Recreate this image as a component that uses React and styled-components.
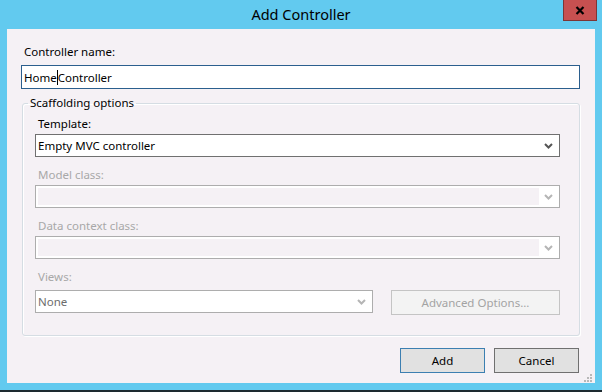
import React from 'react';
import styled, { createGlobalStyle } from 'styled-components';

const GlobalStyle = createGlobalStyle`
  html, body {
    margin: 0;
    padding: 0;
    background: #62caef;
  }
  body {
    font-family: 'Noto Sans', 'Liberation Sans', sans-serif;
    font-size: 11.5px;
  }
`;

const Window = styled.div`
  width: 602px;
  height: 392px;
  box-sizing: border-box;
  background: #62caef;
  border-bottom: 2px solid #1d2a30;
  display: flex;
  flex-direction: column;
`;

const TitleBar = styled.div`
  position: relative;
  height: 29px;
  display: flex;
  align-items: center;
  justify-content: center;

  h1 {
    margin: 0;
    font-family: 'Noto Sans', sans-serif;
    font-size: 14.5px;
    font-weight: 400;
    color: #000;
    line-height: 29px;
  }
`;

const CloseButton = styled.div`
  position: absolute;
  top: 0;
  right: 5px;
  width: 34px;
  height: 21px;
  box-sizing: border-box;
  background: #c75050;
  border: 1px solid #7d3535;
  border-top: none;
  display: flex;
  align-items: center;
  justify-content: center;
`;

const Client = styled.div`
  margin-left: 7px;
  width: 588px;
  height: 354px;
  background: #f5f1f5;
  display: flex;
  flex-direction: column;
  position: relative;
`;

const Label = styled.div`
  line-height: 16px;
  height: 16px;
  color: ${(p) => (p.disabled ? '#a8a8a8' : '#000')};
  white-space: nowrap;
`;

const NameLabel = styled(Label)`
  margin: 15px 0 5px 17px;
`;

const NameInput = styled.div`
  margin-left: 14px;
  width: 559px;
  height: 24px;
  box-sizing: border-box;
  border: 1px solid #2b5f8e;
  background: #fff;
  display: flex;
  align-items: center;
  padding-left: 2px;
  color: #000;
`;

const Caret = styled.span`
  display: inline-block;
  width: 1px;
  height: 15px;
  background: #000;
`;

const Group = styled.fieldset`
  margin: 6px 0 0 15px;
  width: 558px;
  height: 241px;
  box-sizing: border-box;
  border: 1px solid #d5dde3;
  border-radius: 3px;
  box-shadow: inset 1px 1px 0 #fff, 1px 1px 0 #fff;
  padding: 5px 19px 0 12px;
  display: flex;
  flex-direction: column;
`;

const Legend = styled.legend`
  margin-left: -7px;
  padding: 0 2px;
  line-height: 16px;
  color: #000;
`;

const Field = styled.div`
  display: flex;
  flex-direction: column;
  margin-bottom: ${(p) => p.gap ?? 10}px;
`;

const FieldLabel = styled(Label)`
  margin: 0 0 2px 3px;
`;

const Combo = styled.div`
  width: ${(p) => p.width}px;
  height: 23px;
  box-sizing: border-box;
  border: 1px solid ${(p) => (p.active ? '#707070' : '#adadad')};
  background: #fff;
  display: flex;
  align-items: stretch;
  color: ${(p) => (p.active ? '#000' : '#6d6d6d')};
`;

const ComboValue = styled.div`
  flex: 1;
  display: flex;
  align-items: center;
  padding-left: 2px;
  margin: ${(p) => (p.inset ? '2px 0 2px 2px' : '0')};
  background: ${(p) => (p.inset ? '#f5f1f5' : 'transparent')};
`;

const ComboArrow = styled.div`
  width: 19px;
  display: flex;
  align-items: center;
  justify-content: center;
  padding-right: 1px;
`;

const ViewsRow = styled.div`
  display: flex;
  align-items: flex-start;
  gap: 18px;
  margin-top: 3px;
`;

const Button = styled.div`
  width: ${(p) => p.width}px;
  height: 25px;
  box-sizing: border-box;
  display: flex;
  align-items: center;
  justify-content: center;
  border: 1px solid ${(p) => p.border};
  background: ${(p) => p.bg};
  color: ${(p) => (p.disabled ? '#a3a3a3' : '#000')};
`;

const ButtonBar = styled.div`
  display: flex;
  justify-content: flex-end;
  gap: 9px;
  margin: 12px 16px 0 0;
`;

const Grip = styled.svg`
  position: absolute;
  right: 2px;
  bottom: 1px;
`;

const Chevron = ({ color }) => (
  <svg width='9' height='6' viewBox='0 0 9 6'>
    <path d='M1 1 L4.5 4.5 L8 1' fill='none' stroke={color} strokeWidth='2' />
  </svg>
);

const Select = ({ width, active, inset, value, arrow }) => (
  <Combo width={width} active={active}>
    <ComboValue inset={inset}>{value}</ComboValue>
    <ComboArrow>
      <Chevron color={arrow} />
    </ComboArrow>
  </Combo>
);

const App = () => {
  return (
    <>
      <GlobalStyle />
      <Window>
        <TitleBar>
          <h1>Add Controller</h1>
          <CloseButton>
            <svg width='10' height='9' viewBox='0 0 10 9'>
              <path d='M1.5 1 L8.5 8 M8.5 1 L1.5 8' stroke='#000' strokeWidth='2.2' />
            </svg>
          </CloseButton>
        </TitleBar>
        <Client>
          <NameLabel>Controller name:</NameLabel>
          <NameInput>
            Home
            <Caret />
            Controller
          </NameInput>
          <Group>
            <Legend>Scaffolding options</Legend>
            <Field>
              <FieldLabel>Template:</FieldLabel>
              <Select width={525} active value='Empty MVC controller' arrow='#555' />
            </Field>
            <Field>
              <FieldLabel disabled>Model class:</FieldLabel>
              <Select width={525} inset arrow='#b5b5b5' />
            </Field>
            <Field>
              <FieldLabel disabled>Data context class:</FieldLabel>
              <Select width={525} inset arrow='#b5b5b5' />
            </Field>
            <Field gap={0}>
              <FieldLabel disabled>Views:</FieldLabel>
              <ViewsRow>
                <Select width={338} value='None' arrow='#b5b5b5' />
                <Button width={169} border='#c4c4c4' bg='#f3f3f3' disabled>
                  Advanced Options...
                </Button>
              </ViewsRow>
            </Field>
          </Group>
          <ButtonBar>
            <Button width={85} border='#3c7fb1' bg='#e1e1e1'>
              Add
            </Button>
            <Button width={85} border='#707070' bg='#e1e1e1'>
              Cancel
            </Button>
          </ButtonBar>
          <Grip width='10' height='9' viewBox='0 0 10 9'>
            {[
              [7, 1],
              [4, 4],
              [7, 4],
              [1, 7],
              [4, 7],
              [7, 7],
            ].map(([x, y]) => (
              <rect key={`${x}-${y}`} x={x} y={y} width='2' height='2' fill='#b8b8b8' />
            ))}
          </Grip>
        </Client>
      </Window>
    </>
  );
};

export default App;
